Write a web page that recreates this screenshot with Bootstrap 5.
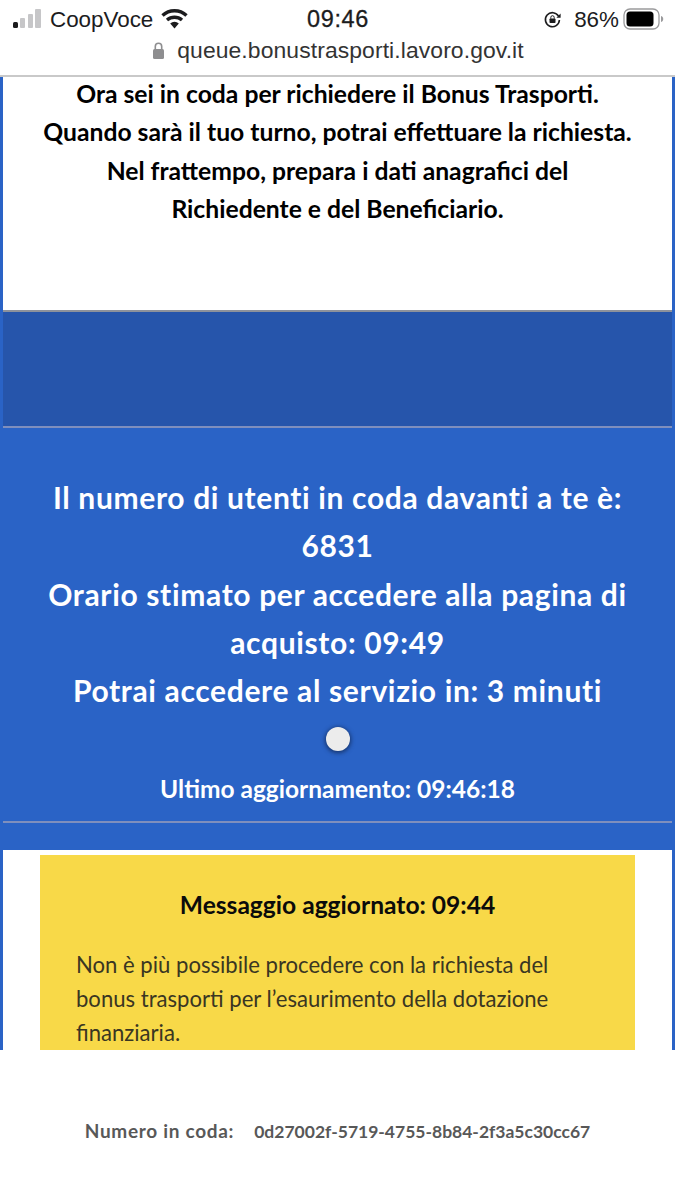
<!DOCTYPE html>
<html lang="it">
<head>
<meta charset="utf-8">
<title>Coda Bonus Trasporti</title>
<link href="https://cdn.jsdelivr.net/npm/bootstrap@5.3.0/dist/css/bootstrap.min.css" rel="stylesheet">
<style>
html,body{height:1200px;overflow:hidden;background:#fff}
body{font-family:"Lato","Liberation Sans",sans-serif}
.phone-bar{height:75px;color:#1c1c1e;font-family:"Liberation Sans",sans-serif;padding:0 11px 0 12px}
.status-row{height:37px;padding-top:2px}
.status-side{width:270px;font-size:22.4px}
.clock{font-size:23.500px;font-weight:500;letter-spacing:.6px;-webkit-text-stroke:.3px #1c1c1e}
.url-row{height:27px;font-size:22.900px;color:#333;letter-spacing:.1px}
.page-frame{height:975px;border-top:2px solid #c9c9c9;background:#2a63c6;padding:0 3px}
.intro-box{display:flow-root;height:235px;background:#fff;border-bottom:2px solid #8d929c;color:#000;font-weight:700;font-size:24.700px;line-height:38.300px}
.intro-lines{margin-top:-2px}
.dark-gap{height:114px;background:#2655ab}
.queue-box{height:424px;border-top:2px solid #7f8fbd;background:#2a63c6;color:#fff;font-weight:700;padding-top:45px}
.queue-lines{font-size:30px;letter-spacing:.65px;line-height:48.300px}
.spin-dot{width:24px;height:24px;border-radius:50%;background:#ececec;box-shadow:0 1px 4px 1px #17366f;margin:13px auto 0}
.updated{font-size:24.500px;line-height:32px;margin-top:22px}
.rule-line{height:2px;background:#7f8fbd;margin-top:16px}
.white-part{height:200px;background:#fff;padding:5px 37px 0}
.notice{height:195px;background:#f8d948;overflow:hidden}
.notice-head{font-weight:700;color:#0b0b0b;font-size:24.600px;line-height:32px;padding-top:34px}
.notice-text{font-size:22.100px;line-height:34px;color:#3a3622;margin:27px 60px 0 36px}
.foot{height:150px;font-size:19px;letter-spacing:.7px;font-weight:700;color:#585858;padding-top:69px;line-height:24px}
.foot-id{font-size:17.500px;letter-spacing:0;margin-left:20px}
</style>
</head>
<body>
<div class="phone-bar">
  <div class="status-row d-flex align-items-center justify-content-between">
    <div class="status-side d-flex align-items-center gap-2">
      <svg width="30" height="20" viewBox="0 0 30 20" aria-hidden="true"><rect x="1" y="13" width="5" height="6" rx="1.500" fill="#1c1c1e"/><rect x="8" y="9" width="5" height="10" rx="1" fill="#c6c6c8"/><rect x="16" y="5" width="5" height="14" rx="1" fill="#c6c6c8"/><rect x="23" y="0" width="6" height="19" rx="1" fill="#c6c6c8"/></svg>
      <span>CoopVoce</span>
      <svg width="27" height="22" viewBox="0 0 27 22" aria-hidden="true"><path d="M1.500 7.500a17.500 17.500 0 0 1 24 0" fill="none" stroke="#1c1c1e" stroke-width="3.400"/><path d="M6 12a11.500 11.500 0 0 1 15 0" fill="none" stroke="#1c1c1e" stroke-width="3.400"/><path d="M9.200 15.500a6.200 6.200 0 0 1 8.600 0L13.500 20.500z" fill="#1c1c1e"/></svg>
    </div>
    <div class="clock">09:46</div>
    <div class="status-side d-flex align-items-center justify-content-end gap-1">
      <svg width="19" height="19" viewBox="0 0 19 19" class="me-2" aria-hidden="true"><path d="M15.500 6.200A7 7 0 1 0 16.400 10" fill="none" stroke="#1c1c1e" stroke-width="1.600"/><path d="M17.600 3.600v4.200h-4.200z" fill="#1c1c1e"/><rect x="6.500" y="8.500" width="6" height="4.500" rx=".8" fill="#1c1c1e"/><path d="M7.800 8.700V7.400a1.700 1.700 0 0 1 3.400 0v1.300" fill="none" stroke="#1c1c1e" stroke-width="1"/></svg>
      <span>86%</span>
      <svg width="41" height="22" viewBox="0 0 41 22" aria-hidden="true"><rect x="1" y="1" width="35" height="20" rx="6" fill="none" stroke="#9a9a9c" stroke-width="1.300"/><rect x="3.500" y="3.500" width="27" height="15" rx="3.500" fill="#000"/><path d="M38 8c1.800.4 2.200 1.800 2.200 3s-.4 2.600-2.200 3z" fill="#9a9a9c"/></svg>
    </div>
  </div>
  <div class="url-row d-flex align-items-center justify-content-center gap-2">
    <svg width="13" height="17" viewBox="0 0 13 17" class="me-1" aria-hidden="true"><rect x="1" y="7" width="11" height="10" rx="1.500" fill="#8e8e90"/><path d="M3.300 7.500V4.500a3.200 3.200 0 0 1 6.400 0v3" fill="none" stroke="#8e8e90" stroke-width="1.600"/></svg>
    <span>queue.bonustrasporti.lavoro.gov.it</span>
  </div>
</div>
<div class="page-frame">
  <div class="intro-box text-center">
    <div class="intro-lines">
    Ora sei in coda per richiedere il Bonus Trasporti.<br>
    Quando sarà il tuo turno, potrai effettuare la richiesta.<br>
    Nel frattempo, prepara i dati anagrafici del<br>
    Richiedente e del Beneficiario.
    </div>
  </div>
  <div class="dark-gap"></div>
  <div class="queue-box text-center">
    <div class="queue-lines">
      Il numero di utenti in coda davanti a te è:<br>
      6831<br>
      Orario stimato per accedere alla pagina di<br>
      acquisto: 09:49<br>
      Potrai accedere al servizio in: 3 minuti
    </div>
    <div class="spin-dot"></div>
    <div class="updated">Ultimo aggiornamento: 09:46:18</div>
    <div class="rule-line"></div>
  </div>
  <div class="white-part">
    <div class="notice">
      <div class="notice-head text-center">Messaggio aggiornato: 09:44</div>
      <div class="notice-text">Non è più possibile procedere con la richiesta del bonus trasporti per l’esaurimento della dotazione finanziaria.</div>
    </div>
  </div>
</div>
<div class="foot text-center"><span>Numero in coda:</span><span class="foot-id">0d27002f-5719-4755-8b84-2f3a5c30cc67</span></div>
<script src="https://cdn.jsdelivr.net/npm/bootstrap@5.3.0/dist/js/bootstrap.bundle.min.js"></script>
</body>
</html>
